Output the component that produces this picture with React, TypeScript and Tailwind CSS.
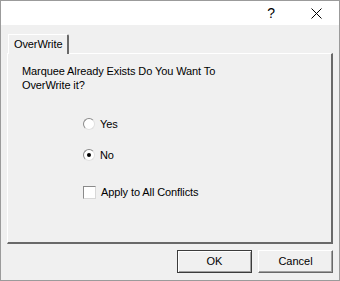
import React from "react";

export default function App() {
  const font = { fontFamily: "'Liberation Sans', Arial, sans-serif" };
  return (
    <div
      className="w-[340px] h-[281px] bg-[#f0f0f0] border border-[#9b9b9b] flex flex-col text-[11px] text-black overflow-hidden"
      style={font}
    >
      {/* title bar */}
      <div className="h-[24px] bg-white flex items-center justify-end shrink-0">
        <span className="text-[14px] mr-[36px] leading-none text-black">?</span>
        <svg width="11" height="11" viewBox="0 0 11 11" className="mr-[17px]">
          <path d="M0.5 0.5 L10.5 10.5 M10.5 0.5 L0.5 10.5" stroke="#000" strokeWidth="1" />
        </svg>
      </div>
      {/* tab strip */}
      <div className="pl-[7px] pt-[9px] flex shrink-0 relative z-10">
        <div className="h-[20px] px-[5px] pt-[3px] border-t border-l border-white border-r-2 border-r-[#696969] rounded-tr-[2px] bg-[#f0f0f0] mb-[-1px] leading-[13px] tracking-[-0.1px]">
          OverWrite
        </div>
      </div>
      {/* panel */}
      <div className="ml-[6px] mr-[6px] h-[191px] border-t border-l border-white border-r-2 border-b-2 border-r-[#696969] border-b-[#696969] flex flex-col pl-[14px] pt-[10px] tracking-[-0.1px]">
        <div className="leading-[14px] w-[240px]">
          Marquee Already Exists Do You Want To OverWrite it?
        </div>
        <div className="ml-[61px] mt-[25px] flex flex-col">
          <div className="flex items-center h-[14px]">
            <span className="w-[12px] h-[12px] rounded-full border border-t-[#8a8a8a] border-l-[#8a8a8a] border-r-[#e0e0e0] border-b-[#e0e0e0] bg-white shrink-0" />
            <span className="ml-[5px]">Yes</span>
          </div>
          <div className="flex items-center h-[14px] mt-[17px]">
            <span className="w-[12px] h-[12px] rounded-full border border-t-[#8a8a8a] border-l-[#8a8a8a] border-r-[#e0e0e0] border-b-[#e0e0e0] bg-white shrink-0 flex items-center justify-center">
              <span className="w-[4px] h-[4px] rounded-full bg-black" />
            </span>
            <span className="ml-[5px]">No</span>
          </div>
          <div className="flex items-center h-[14px] mt-[23px]">
            <span className="w-[13px] h-[13px] border border-t-[#8a8a8a] border-l-[#8a8a8a] border-r-[#d8d8d8] border-b-[#d8d8d8] bg-white shrink-0" />
            <span className="ml-[5px]">Apply to All Conflicts</span>
          </div>
        </div>
      </div>
      {/* buttons */}
      <div className="flex justify-end gap-[6px] pr-[6px] mt-[6px]">
        <button className="w-[75px] h-[23px] bg-[#f0f0f0] border border-[#3c3c3c] shadow-[inset_1px_1px_0_#fff,inset_-1px_-1px_0_#a0a0a0] flex items-center justify-center">
          OK
        </button>
        <button className="w-[75px] h-[23px] bg-[#f0f0f0] border border-t-white border-l-white border-r-[#696969] border-b-[#696969] shadow-[inset_-1px_-1px_0_#a0a0a0] flex items-center justify-center">
          Cancel
        </button>
      </div>
    </div>
  );
}
